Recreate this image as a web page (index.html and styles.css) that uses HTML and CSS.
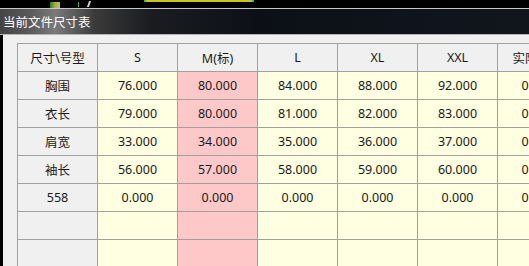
FILE: index.html
```html
<!DOCTYPE html>
<html lang="zh">
<head>
<meta charset="utf-8">
<title>当前文件尺寸表</title>
<link rel="stylesheet" href="styles.css">
</head>
<body>
<div class="screen">
  <div class="topstrip">
    <span class="mark mark-a"></span>
    <span class="mark mark-b"></span>
    <span class="mark mark-c"></span>
    <span class="mark mark-line"></span>
  </div>
  <div class="rule"></div>
  <div class="titlebar">当前文件尺寸表</div>
  <div class="rule rule-bottom"></div>
  <div class="window">
    <div class="grid">
      <div class="cell head">尺寸\号型</div>
      <div class="cell head">S</div>
      <div class="cell head">M(标)</div>
      <div class="cell head">L</div>
      <div class="cell head">XL</div>
      <div class="cell head">XXL</div>
      <div class="cell head">实际尺寸</div>

      <div class="cell head">胸围</div>
      <div class="cell data">76.000</div>
      <div class="cell data std">80.000</div>
      <div class="cell data">84.000</div>
      <div class="cell data">88.000</div>
      <div class="cell data">92.000</div>
      <div class="cell data">0.000</div>

      <div class="cell head">衣长</div>
      <div class="cell data">79.000</div>
      <div class="cell data std">80.000</div>
      <div class="cell data">81.000</div>
      <div class="cell data">82.000</div>
      <div class="cell data">83.000</div>
      <div class="cell data">0.000</div>

      <div class="cell head">肩宽</div>
      <div class="cell data">33.000</div>
      <div class="cell data std">34.000</div>
      <div class="cell data">35.000</div>
      <div class="cell data">36.000</div>
      <div class="cell data">37.000</div>
      <div class="cell data">0.000</div>

      <div class="cell head">袖长</div>
      <div class="cell data">56.000</div>
      <div class="cell data std">57.000</div>
      <div class="cell data">58.000</div>
      <div class="cell data">59.000</div>
      <div class="cell data">60.000</div>
      <div class="cell data">0.000</div>

      <div class="cell head">558</div>
      <div class="cell data">0.000</div>
      <div class="cell data std">0.000</div>
      <div class="cell data">0.000</div>
      <div class="cell data">0.000</div>
      <div class="cell data">0.000</div>
      <div class="cell data">0.000</div>

      <div class="cell head"></div>
      <div class="cell data"></div>
      <div class="cell data std"></div>
      <div class="cell data"></div>
      <div class="cell data"></div>
      <div class="cell data"></div>
      <div class="cell data"></div>

      <div class="cell head"></div>
      <div class="cell data"></div>
      <div class="cell data std"></div>
      <div class="cell data"></div>
      <div class="cell data"></div>
      <div class="cell data"></div>
      <div class="cell data"></div>
    </div>
  </div>
</div>
</body>
</html>
```

FILE: styles.css
```css
html, body {
  margin: 0;
  padding: 0;
  background: #000;
}

.screen {
  width: 529px;
  height: 266px;
  overflow: hidden;
  display: flex;
  flex-direction: column;
  font-family: "Noto Sans", "Noto Sans CJK SC", sans-serif;
}

.topstrip {
  position: relative;
  height: 8px;
  flex: none;
  background: #000;
}

.mark {
  position: absolute;
  display: block;
}

.mark-a {
  left: 50px;
  top: 2px;
  width: 10px;
  height: 6px;
  background: linear-gradient(to right, #2f8f2f, #c8c84a 50%, #e8e070);
  opacity: 0.85;
}

.mark-b {
  left: 78px;
  top: 2px;
  width: 1px;
  height: 5px;
  background: #4caf50;
}

.mark-c {
  left: 88px;
  top: 1px;
  width: 2px;
  height: 6px;
  background: #d8d8c8;
  transform: skewX(-20deg);
}

.mark-line {
  left: 144px;
  top: 0;
  width: 106px;
  height: 2px;
  background: #c8c41e;
  border-left: 2px solid #2fb0a0;
  border-right: 2px solid #2fb0a0;
}

.rule {
  height: 1px;
  flex: none;
  background: #c8c8c8;
}

.rule-bottom {
  background: #b4b4b4;
}

.titlebar {
  height: 25px;
  flex: none;
  padding-left: 3px;
  display: flex;
  align-items: center;
  color: #ffffff;
  font-family: "Noto Sans CJK SC", sans-serif;
  font-size: 12.5px;
  background: linear-gradient(to right, #454545 0px, #5a5a5a 30px, #7a7a7a 55px, #3a3a3a 95px, #1a1c20 150px, #0c1016 260px, #0e141c 420px, #12161c 529px);
}

.window {
  flex: 1;
  background: #f0f0f0;
  border-left: 3px solid #000;
  padding: 8px 0 0 14px;
  overflow: hidden;
}

.grid {
  display: grid;
  grid-template-columns: repeat(7, 79px);
  grid-auto-rows: 27px;
  gap: 1px;
  padding: 1px 0 0 1px;
  width: max-content;
  background: #a0a0a0;
}

.cell {
  display: flex;
  align-items: center;
  justify-content: center;
  font-size: 12.5px;
  color: #1a1a1a;
  white-space: nowrap;
  overflow: hidden;
}

.head {
  background: #f0f0f0;
  font-family: "Noto Sans", "Noto Sans CJK SC", sans-serif;
}

.data {
  background: #ffffe1;
}

.std {
  background: #ffc8c8;
}
```
